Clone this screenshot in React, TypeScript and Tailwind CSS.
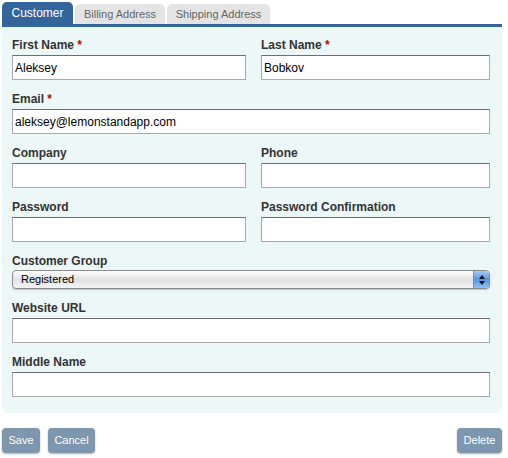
import React from "react";

function Field({ label, value = "", required = false, wide = false }: { label: string; value?: string; required?: boolean; wide?: boolean }) {
  return (
    <div className={wide ? "col-span-2" : ""}>
      <div className="h-[15px] text-[12px] leading-[15px] font-bold text-[#333]">
        {label}
        {required && <span className="text-[#cc0000]"> *</span>}
      </div>
      <input
        readOnly
        value={value}
        className="mt-[2px] block h-[25px] w-full border border-[#a9a9a9] border-t-[#6e6e6e] bg-white px-[2px] text-[12px] text-black outline-none"
      />
    </div>
  );
}

export default function App() {
  return (
    <div className="w-[508px] h-[458px] bg-white pt-[2px] px-[2px] font-['Liberation_Sans',Arial,sans-serif]">
      <div className="flex items-end h-[22px] gap-[2px]">
        <div className="h-[22px] w-[71px] rounded-t-[5px] bg-[#33659a] text-white text-[12px] leading-[22px] text-center">Customer</div>
        <div className="h-[20px] w-[90px] rounded-t-[5px] bg-[#e4e4e4] text-[#666] text-[11px] leading-[21px] text-center">Billing Address</div>
        <div className="h-[20px] w-[103px] rounded-t-[5px] bg-[#e4e4e4] text-[#666] text-[11px] leading-[21px] text-center">Shipping Address</div>
      </div>
      <div className="h-[3px] w-[500px] bg-[#33659a]" />
      <div className="w-[500px] h-[386px] rounded-b-[6px] bg-[#ecf7f7] pl-[10px] pt-[11px]">
        <div className="grid grid-cols-[234px_229px] gap-x-[15px] gap-y-[12px] w-[478px]">
          <Field label="First Name" value="Aleksey" required />
          <Field label="Last Name" value="Bobkov" required />
          <Field label="Email" value="aleksey@lemonstandapp.com" required wide />
          <Field label="Company" />
          <Field label="Phone" />
          <Field label="Password" />
          <Field label="Password Confirmation" />
          <div className="col-span-2">
            <div className="h-[15px] text-[12px] leading-[15px] font-bold text-[#333]">Customer Group</div>
            <div className="mt-[1px] flex h-[19px] w-full overflow-hidden rounded-[4px] border border-[#8a8a8a] bg-gradient-to-b from-[#ffffff] via-[#e2e2e2] to-[#f4f4f4] shadow-[0_1px_1px_rgba(0,0,0,0.2)]">
              <div className="flex-1 pl-[8px] text-[11px] leading-[17px] text-black">Registered</div>
              <div className="flex w-[16px] flex-col items-center justify-center gap-[2px] bg-gradient-to-b from-[#a9c8f0] via-[#5b95e0] to-[#8fc0f5] border-l border-[#6d8fbf]">
                <svg width="6" height="4" viewBox="0 0 6 4"><path d="M3 0 L6 4 L0 4 Z" fill="#111" /></svg>
                <svg width="6" height="4" viewBox="0 0 6 4"><path d="M0 0 L6 0 L3 4 Z" fill="#111" /></svg>
              </div>
            </div>
          </div>
          <Field label="Website URL" wide />
          <Field label="Middle Name" wide />
        </div>
      </div>
      <div className="mt-[15px] flex items-center w-[500px]">
        <button className="h-[25px] w-[38px] rounded-[4px] bg-[#7d97ae] text-white text-[11px] shadow-[0_1px_2px_rgba(0,0,0,0.3)]">Save</button>
        <button className="ml-[8px] h-[25px] w-[47px] rounded-[4px] bg-[#7d97ae] text-white text-[11px] shadow-[0_1px_2px_rgba(0,0,0,0.3)]">Cancel</button>
        <button className="ml-auto h-[25px] w-[45px] rounded-[4px] bg-[#7d97ae] text-white text-[11px] shadow-[0_1px_2px_rgba(0,0,0,0.3)]">Delete</button>
      </div>
    </div>
  );
}
